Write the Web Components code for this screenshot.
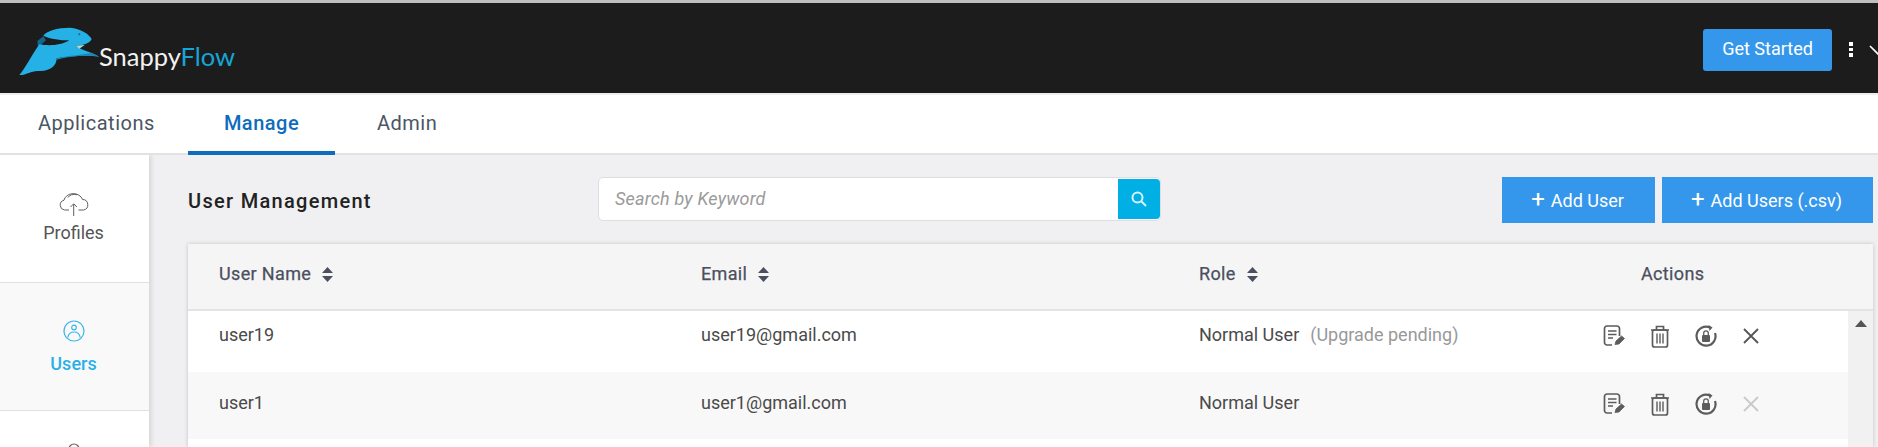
<!DOCTYPE html>
<html lang="en">
<head>
<meta charset="utf-8">
<title>SnappyFlow - User Management</title>
<style>
  html,body{margin:0;height:447px;overflow:hidden;background:#f0f0f2;font-family:Roboto,"Liberation Sans",sans-serif}
</style>
</head>
<body>
<sf-app>
  <sf-header></sf-header>
  <sf-tabs></sf-tabs>
  <sf-shell>
    <sf-sidebar slot="side">
      <sf-side-item label="Profiles" icon="cloud"></sf-side-item>
      <sf-side-item label="Users" icon="user" active></sf-side-item>
      <sf-side-item icon="more"></sf-side-item>
    </sf-sidebar>
    <sf-toolbar title="User Management"></sf-toolbar>
    <sf-user-table>
      <sf-user-row name="user19" email="user19@gmail.com" role="Normal User" note="(Upgrade pending)" first></sf-user-row>
      <sf-user-row name="user1" email="user1@gmail.com" role="Normal User" alt disabled></sf-user-row>
    </sf-user-table>
  </sf-shell>
</sf-app>

<script>
// small helper, every element just sets its shadow html once
class SfBase extends HTMLElement {
  constructor() {
    super();
    this.attachShadow({ mode: 'open' });
  }
  connectedCallback() {
    this.shadowRoot.innerHTML = this.markup();
  }
}

class SfApp extends SfBase {
  markup() {
    return `<style>
      :host{display:flex;flex-direction:column;height:447px;overflow:hidden;border-top:3px solid #bfbfbf;box-sizing:border-box}
    </style><slot></slot>`;
  }
}

class SfHeader extends SfBase {
  markup() {
    return `<style>
      :host{display:flex;align-items:center;height:90px;background:#1c1c1c;border-bottom:2px solid #eee;padding-left:10px;overflow:hidden;flex:none}
      .logo{display:flex;align-items:center;margin-top:4px}
      svg.rabbit{width:90px;height:70px;flex:none}
      .word{font:400 25.5px/1 Lato,"Open Sans",sans-serif;color:#f2f2f2;margin:14px 0 0 -1px}
      .word b{font-weight:400;color:#17a5d6}
      .spacer{flex:1}
      button{width:129px;height:42px;border:0;border-radius:3px;background:#3597ec;color:#fff;font:400 18px Roboto,sans-serif;margin-top:4px;padding:0 0 3px}
      .kebab{width:4px;display:flex;flex-direction:column;gap:2px;margin:3px 0 0 17px;flex:none}
      .kebab i{display:block;width:4px;height:3.5px;background:#fff}
      .chev{width:20px;height:12px;margin:3px -10px 0 15px;flex:none}
    </style>
    <div class="logo">
      <svg class="rabbit" viewBox="0 0 270 210">
        <path fill="#14648c" d="M82 78L100 64L108 76L92 90L84 98Z"/>
        <path fill="#25b0e6" d="M28 180C44 164 62 125 88 88C110 92 150 94 178 76C150 76 122 72 100 62C110 48 140 38 180 38C212 40 238 58 245 72C240 84 222 92 197 92C206 102 238 108 268 125C236 120 180 122 140 130C140 150 124 170 85 168C66 166 46 182 28 180Z"/>
        <path fill="#1b85b4" d="M140 130C176 122 226 118 244 114L268 125C236 120 180 122 140 134Z"/>
        <path fill="#a8dfd5" d="M197 92L224 90L208 101Z"/>
        <circle cx="208" cy="58" r="3" fill="#14648c"/>
      </svg>
      <span class="word">Snappy<b>Flow</b></span>
    </div>
    <div class="spacer"></div>
    <button>Get Started</button>
    <div class="kebab"><i></i><i></i><i></i></div>
    <svg class="chev" viewBox="0 0 20 12"><path d="M2 2l8 8 8-8" fill="none" stroke="#fff" stroke-width="1.6"/></svg>`;
  }
}

class SfTabs extends SfBase {
  markup() {
    return `<style>
      :host{display:flex;height:60px;background:#fff;flex:none;box-sizing:border-box;border-bottom:2px solid #e2e2e2;font:400 20px Roboto,sans-serif;letter-spacing:.5px;color:#4b5563;z-index:2;position:relative}
      a{display:flex;align-items:center;box-sizing:border-box;height:60px;padding-bottom:5px}
      .apps{margin-left:38px;width:150px}
      .manage{width:147px;justify-content:center;color:#0f6cbd;font-weight:500;border-bottom:4px solid #0f6cbd;padding-bottom:1px}
      .admin{margin-left:42px}
    </style>
    <a class="apps">Applications</a>
    <a class="manage">Manage</a>
    <a class="admin">Admin</a>`;
  }
}

class SfShell extends SfBase {
  markup() {
    return `<style>
      :host{display:flex;flex:1;min-height:0}
      .main{flex:1;min-width:0;padding:23px 5px 0 39px;display:flex;flex-direction:column}
    </style>
    <slot name="side"></slot>
    <div class="main"><slot></slot></div>`;
  }
}

class SfSidebar extends SfBase {
  markup() {
    return `<style>
      :host{display:flex;flex-direction:column;width:149px;flex:none;background:#fff;box-shadow:2px 0 5px rgba(0,0,0,.12);position:relative}
    </style><slot></slot>`;
  }
}

const SIDE_ICONS = {
  cloud: `<svg width="30" height="24" viewBox="0 0 30 24" fill="none" stroke="#5f5f5f" stroke-width="1"><path d="M10 18H5.500A5 5 0 0 1 5 8.200 9.500 8 0 0 1 23.500 7.500 5.300 5.300 0 0 1 24.500 18H19.500"/><path d="M9 5.500A6.500 4.500 0 0 1 18 2.800"/><path d="M14.700 24V12M11.500 15l3.200-3.200 3.200 3.200"/></svg>`,
  user: `<svg width="22" height="22" viewBox="0 0 22 22" fill="none" stroke="#3bb6ea" stroke-width="1.200"><circle cx="11" cy="11" r="10"/><circle cx="11" cy="7.500" r="2.300"/><path d="M4.800 17.500C5.500 13.500 8 12 11 12s5.500 1.500 6.200 5.500"/></svg>`,
  more: `<svg width="24" height="24" viewBox="0 0 24 24" fill="none" stroke="#5f5f5f" stroke-width="1.200"><circle cx="12" cy="8" r="5"/></svg>`
};

class SfSideItem extends SfBase {
  markup() {
    const icon = this.getAttribute('icon');
    const label = this.getAttribute('label');
    return `<style>
      :host{display:flex;flex-direction:column;align-items:center;height:128px;box-sizing:border-box;border-bottom:1px solid #e0e0e0;padding:30px 2px 0 0;font:400 18px Roboto,sans-serif;color:#555;flex:none}
      :host([icon=cloud]){height:128px;padding-top:37px}
      :host([active]){background:#f9f9f9;color:#2ab0e8;font-weight:500;padding-top:37px}
      svg{display:block}
      span{line-height:20px;margin-top:7px}
      :host([active]) span{margin-top:12px}
    </style>${SIDE_ICONS[icon]}${label ? `<span>${label}</span>` : ''}`;
  }
}

class SfToolbar extends SfBase {
  markup() {
    return `<style>
      :host{display:flex;align-items:flex-start;height:66px;flex:none}
      h2{margin:13px 0 0;width:410px;font:500 20px/20px Roboto,sans-serif;letter-spacing:1.3px;color:#222}
      .search{display:flex;width:563px;height:44px;box-sizing:border-box;border:1px solid #dedede;border-radius:5px;background:#fff;padding:1px 0 1px 0;margin-top:-1px}
      .search span{flex:1;padding-left:16px;font:italic 400 18px/39px Roboto,sans-serif;color:#9a9a9a;letter-spacing:.2px}
      .go{width:42px;background:#00b0e4;display:flex;align-items:center;justify-content:center;border-radius:0 4px 4px 0}
      .btns{display:flex;gap:7px;margin-left:auto}
      .add{height:46px;display:flex;align-items:center;justify-content:center;gap:6px;background:#3597ec;color:#fff;font:400 18px Roboto,sans-serif;margin-top:-1px;padding-right:2px;box-sizing:border-box}
      .a1{width:153px}.a2{width:211px}
      .add i{font:normal 400 24px/20px Roboto,sans-serif;margin-top:-3px}
    </style>
    <h2>${this.getAttribute('title')}</h2>
    <div class="search"><span>Search by Keyword</span>
      <div class="go"><svg width="18" height="18" viewBox="0 0 18 18" fill="none" stroke="#d8f3fb" stroke-width="2"><circle cx="7.500" cy="7.500" r="5"/><path d="M11.500 11.500L16 16"/></svg></div>
    </div>
    <div class="btns">
      <div class="add a1"><i>+</i><span>Add User</span></div>
      <div class="add a2"><i>+</i><span>Add Users (.csv)</span></div>
    </div>`;
  }
}

const SORT_ICON = `<svg width="11" height="15" viewBox="0 0 11 15" fill="#4b4f60"><path d="M5.500 0L11 6H0ZM5.500 15L0 9h11Z"/></svg>`;

class SfUserTable extends SfBase {
  markup() {
    return `<style>
      :host{display:flex;flex-direction:column;flex:1;min-height:0;background:#fff;box-shadow:0 0 4px rgba(0,0,0,.2);overflow:hidden}
      .head{display:grid;grid-template-columns:482px 498px 405px 1fr;height:67px;flex:none;background:#f5f5f5;border-bottom:2px solid #e3e3e3;padding-left:31px;box-sizing:border-box;font:400 18px/20px Roboto,sans-serif;letter-spacing:.35px;color:#4b4f60;padding-top:20px;-webkit-text-stroke:.25px #4b4f60}
      .head div{display:flex;gap:11px;align-items:center;height:20px}
      .head .act{padding-left:37px}
      .body{display:flex;flex:1;min-height:0}
      .rows{flex:1;min-width:0}
      .bar{width:25px;background:#f1f1f1;flex:none;display:flex;justify-content:center;padding-top:9px;box-sizing:border-box}
      .bar svg{display:block}
    </style>
    <div class="head">
      <div>User Name ${SORT_ICON}</div>
      <div>Email ${SORT_ICON}</div>
      <div>Role ${SORT_ICON}</div>
      <div class="act">Actions</div>
    </div>
    <div class="body">
      <div class="rows"><slot></slot></div>
      <div class="bar"><svg width="12" height="7" viewBox="0 0 12 7"><path d="M6 0l6 7H0Z" fill="#555"/></svg></div>
    </div>`;
  }
}

class SfUserRow extends SfBase {
  markup() {
    const note = this.getAttribute('note');
    const xColor = this.hasAttribute('disabled') ? '#c9c9c9' : '#555';
    return `<style>
      :host{display:grid;grid-template-columns:482px 498px 405px 1fr;padding:21px 0 0 31px;height:67px;box-sizing:border-box;font:400 18px/20px Roboto,sans-serif;color:#4a4a4a}
      :host([first]){height:61px;padding-top:14px}
      :host([alt]){background:#f8f8f8}
      .note{color:#999;margin-left:11px}
      .actions{display:flex;gap:25px;align-items:center;height:24px;margin:-1px 0 0 -1px}
      svg{display:block;flex:none;filter:blur(.35px)}
    </style>
    <div>${this.getAttribute('name')}</div>
    <div>${this.getAttribute('email')}</div>
    <div>${this.getAttribute('role')}${note ? `<span class="note">${note}</span>` : ''}</div>
    <div class="actions">
      <svg width="22" height="22" viewBox="0 0 22 22" fill="none" stroke="#5c5c5c" stroke-width="1.700"><path d="M9 20H4a2.500 2.500 0 0 1-2.500-2.500v-14A2.500 2.500 0 0 1 4 1h10a2.500 2.500 0 0 1 2.500 2.500V11"/><path d="M5 6h8.500M5 9.500h8.500M5 13h5" stroke-width="1.500"/><path d="M12 19.500l1-3.500 5.500-5 3 2.500-5.500 5.500Z" fill="#5c5c5c" stroke-width=".8"/></svg>
      <svg width="20" height="23" viewBox="0 0 20 23" fill="none" stroke="#5c5c5c" stroke-width="1.700"><path d="M1 5h18M6.500 4.500V1.500h7v3"/><rect x="2.500" y="5" width="15" height="17" rx="2"/><path d="M7 8.500v10M10 8.500v10M13 8.500v10" stroke-width="1.400"/></svg>
      <svg width="22" height="22" viewBox="0 0 22 22" fill="none" stroke="#5c5c5c" stroke-width="2.200"><path d="M15 2.500A9.500 9.500 0 1 0 20 8"/><path d="M13.500 0l4 2.500-3 3.500" fill="#5c5c5c" stroke="none"/><rect x="7" y="10" width="8" height="7" rx="1" fill="#5c5c5c" stroke="none"/><path d="M8.700 10V8.200a2.300 2.300 0 0 1 4.600 0V10" stroke-width="1.300"/></svg>
      <svg width="18" height="18" viewBox="0 0 18 18" fill="none" stroke="${xColor}" stroke-width="1.800"><path d="M2 2l14 14M16 2L2 16"/></svg>
    </div>`;
  }
}

customElements.define('sf-app', SfApp);
customElements.define('sf-header', SfHeader);
customElements.define('sf-tabs', SfTabs);
customElements.define('sf-shell', SfShell);
customElements.define('sf-sidebar', SfSidebar);
customElements.define('sf-side-item', SfSideItem);
customElements.define('sf-toolbar', SfToolbar);
customElements.define('sf-user-table', SfUserTable);
customElements.define('sf-user-row', SfUserRow);
</script>
</body>
</html>
